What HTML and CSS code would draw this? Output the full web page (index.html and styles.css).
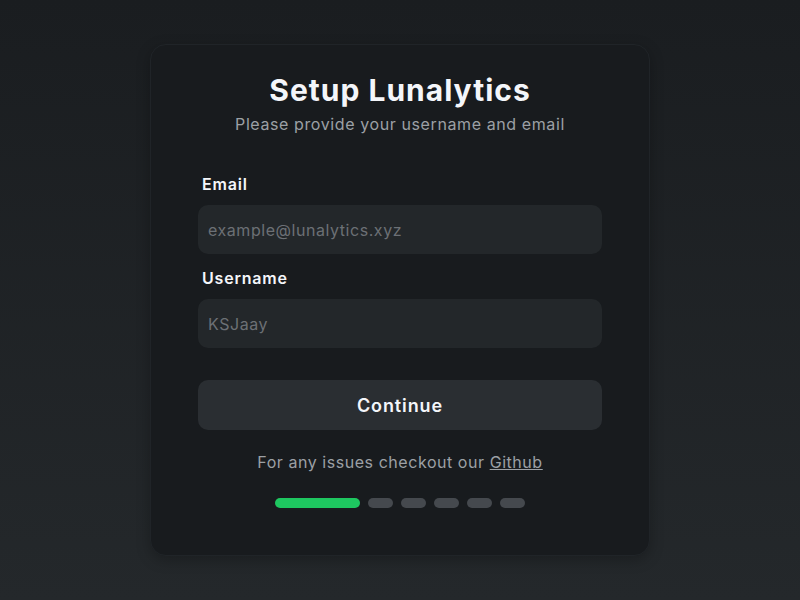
FILE: index.html
```html
<!DOCTYPE html>
<html lang="en">
<head>
<meta charset="utf-8">
<title>Setup Lunalytics</title>
<link rel="stylesheet" href="styles.css">
</head>
<body>
<main class="page">
  <section class="card">
    <header class="head">
      <h1 class="title">Setup Lunalytics</h1>
      <p class="subtitle">Please provide your username and email</p>
    </header>
    <form class="form">
      <label class="field">
        <span class="label">Email</span>
        <input class="input" type="text" placeholder="example@lunalytics.xyz">
      </label>
      <label class="field">
        <span class="label">Username</span>
        <input class="input" type="text" placeholder="KSJaay">
      </label>
      <button class="button" type="button">Continue</button>
    </form>
    <p class="footer">For any issues checkout our <a class="link" href="#">Github</a></p>
    <div class="steps">
      <span class="step step-active"></span>
      <span class="step"></span>
      <span class="step"></span>
      <span class="step"></span>
      <span class="step"></span>
      <span class="step"></span>
    </div>
  </section>
</main>
</body>
</html>
```
FILE: styles.css
```css
* { box-sizing: border-box; }
html, body { margin: 0; padding: 0; height: 100%; }
body {
  font-family: "Inter", "Noto Sans", sans-serif;
  background: linear-gradient(180deg, #1a1d20 0%, #24282b 100%);
  color: #f3f5f7;
}
.page {
  height: 600px;
  display: flex;
  align-items: center;
  justify-content: center;
}
.card {
  width: 500px;
  height: 512px;
  background: #181b1e;
  border: 1px solid #202428;
  border-radius: 16px;
  box-shadow: 0 4px 14px rgba(0,0,0,0.25);
  padding: 26px 47px 0;
  display: flex;
  flex-direction: column;
}
.head { text-align: center; }
.title {
  margin: 0;
  font-size: 30px;
  font-weight: 700;
  line-height: 38px;
  color: #f4f6fa;
  letter-spacing: 1px;
}
.subtitle {
  margin: 4px 0 0;
  font-size: 16px;
  line-height: 22px;
  color: #9ca0a5;
  letter-spacing: 0.6px;
}
.form {
  margin-top: 38px;
  display: flex;
  flex-direction: column;
}
.field {
  display: flex;
  flex-direction: column;
  margin-bottom: 13px;
}
.label {
  font-size: 16px;
  font-weight: 600;
  line-height: 22px;
  padding-left: 4px;
  margin-bottom: 10px;
  color: #f4f6fa;
  letter-spacing: 0.8px;
}
.input {
  height: 49px;
  border: none;
  border-radius: 10px;
  background: #23272a;
  padding: 0 10px;
  font-family: inherit;
  font-size: 16px;
  color: #e5e7eb;
  letter-spacing: 0.55px;
  outline: none;
}
.input::placeholder { color: #6c7075; }
.button {
  margin-top: 19px;
  height: 50px;
  border: none;
  border-radius: 10px;
  background: #2a2e32;
  color: #f4f6fa;
  font-family: inherit;
  font-size: 18px;
  font-weight: 600;
  letter-spacing: 0.9px;
}
.footer {
  margin: 21px 0 0;
  text-align: center;
  font-size: 16px;
  line-height: 22px;
  color: #9ca0a5;
  letter-spacing: 0.55px;
}
.link { color: #9ca0a5; text-decoration: underline; }
.steps {
  margin-top: 25px;
  display: flex;
  justify-content: center;
  gap: 8px;
}
.step {
  width: 25px;
  height: 10px;
  border-radius: 5px;
  background: #45494e;
}
.step-active { width: 85px; background: #1ec760; }
```
